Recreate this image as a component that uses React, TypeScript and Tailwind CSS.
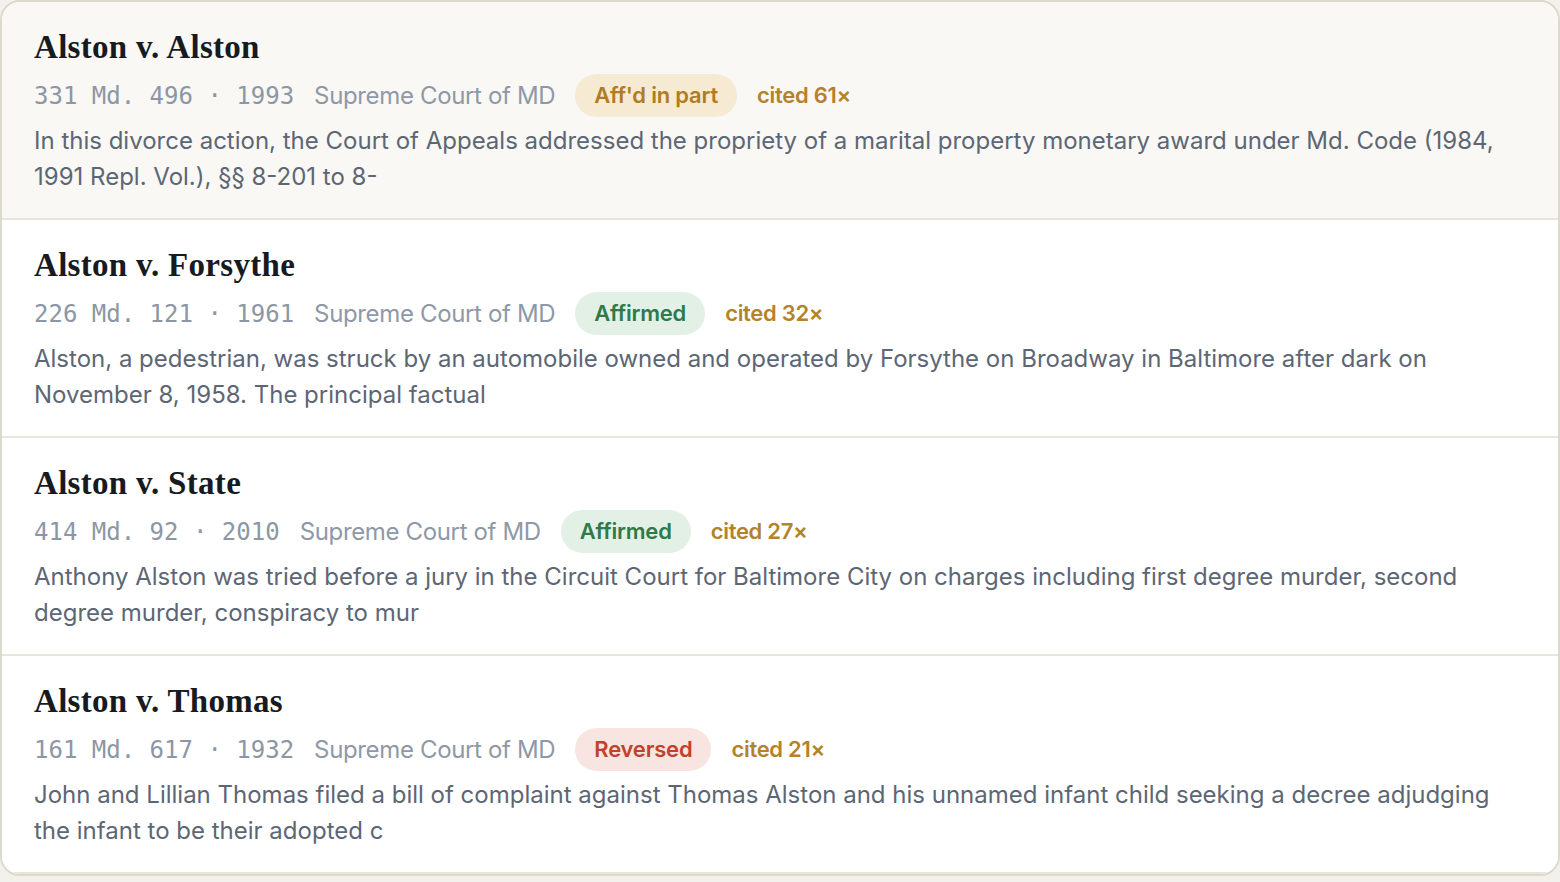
import React from "react";

type Case = {
  title: string;
  cite: string;
  court: string;
  status: "partial" | "affirmed" | "reversed";
  label: string;
  cited: number;
  body: string;
  active?: boolean;
};

const cases: Case[] = [
  {
    title: "Alston v. Alston",
    cite: "331 Md. 496 · 1993",
    court: "Supreme Court of MD",
    status: "partial",
    label: "Aff'd in part",
    cited: 61,
    body: "In this divorce action, the Court of Appeals addressed the propriety of a marital property monetary award under Md. Code (1984, 1991 Repl. Vol.), §§ 8-201 to 8-",
    active: true,
  },
  {
    title: "Alston v. Forsythe",
    cite: "226 Md. 121 · 1961",
    court: "Supreme Court of MD",
    status: "affirmed",
    label: "Affirmed",
    cited: 32,
    body: "Alston, a pedestrian, was struck by an automobile owned and operated by Forsythe on Broadway in Baltimore after dark on November 8, 1958. The principal factual",
  },
  {
    title: "Alston v. State",
    cite: "414 Md. 92 · 2010",
    court: "Supreme Court of MD",
    status: "affirmed",
    label: "Affirmed",
    cited: 27,
    body: "Anthony Alston was tried before a jury in the Circuit Court for Baltimore City on charges including first degree murder, second degree murder, conspiracy to mur",
  },
  {
    title: "Alston v. Thomas",
    cite: "161 Md. 617 · 1932",
    court: "Supreme Court of MD",
    status: "reversed",
    label: "Reversed",
    cited: 21,
    body: "John and Lillian Thomas filed a bill of complaint against Thomas Alston and his unnamed infant child seeking a decree adjudging the infant to be their adopted c",
  },
];

const pillClass: Record<Case["status"], string> = {
  partial: "bg-[#f6ead2] text-[#b07c22]",
  affirmed: "bg-[#e3f0e6] text-[#2e7a4b]",
  reversed: "bg-[#f8e4e0] text-[#c2412c]",
};

const sans = "font-['Inter','Noto_Sans',sans-serif]";

export default function App() {
  return (
    <div className="min-h-[882px] bg-[#f2f1ec]">
      <div className="overflow-hidden rounded-[20px] border-2 border-[#dcd9cd] bg-white">
        {cases.map((c) => (
          <div
            key={c.title}
            className={`border-b-2 border-[#e8e5dc] pl-[32px] pr-[34px] pt-[27px] pb-[23px] ${
              c.active ? "bg-[#f9f8f5]" : "bg-white"
            }`}
          >
            <div className="font-['Liberation_Serif','Times_New_Roman',serif] text-[33px] font-bold leading-[36px] tracking-[0.3px] text-[#171a1f]">
              {c.title}
            </div>
            <div className="mt-[9px] flex items-center gap-[20px]">
              <span className="font-['DejaVu_Sans_Mono','Liberation_Mono',monospace] text-[24px] text-[#8d96a4]">
                {c.cite}
              </span>
              <span className={`${sans} text-[24px] tracking-[-0.35px] text-[#8f98a6]`}>
                {c.court}
              </span>
              <span
                className={`${sans} flex h-[43px] items-center rounded-full px-[19px] text-[22px] font-semibold tracking-[-0.2px] ${pillClass[c.status]}`}
              >
                {c.label}
              </span>
              <span className={`${sans} text-[22px] font-semibold tracking-[-0.3px] text-[#b5822c]`}>
                cited {c.cited}×
              </span>
            </div>
            <p className={`${sans} mt-[6px] text-[24px] leading-[36px] tracking-[0px] text-[#5d6674]`}>
              {c.body}
            </p>
          </div>
        ))}
      </div>
    </div>
  );
}
